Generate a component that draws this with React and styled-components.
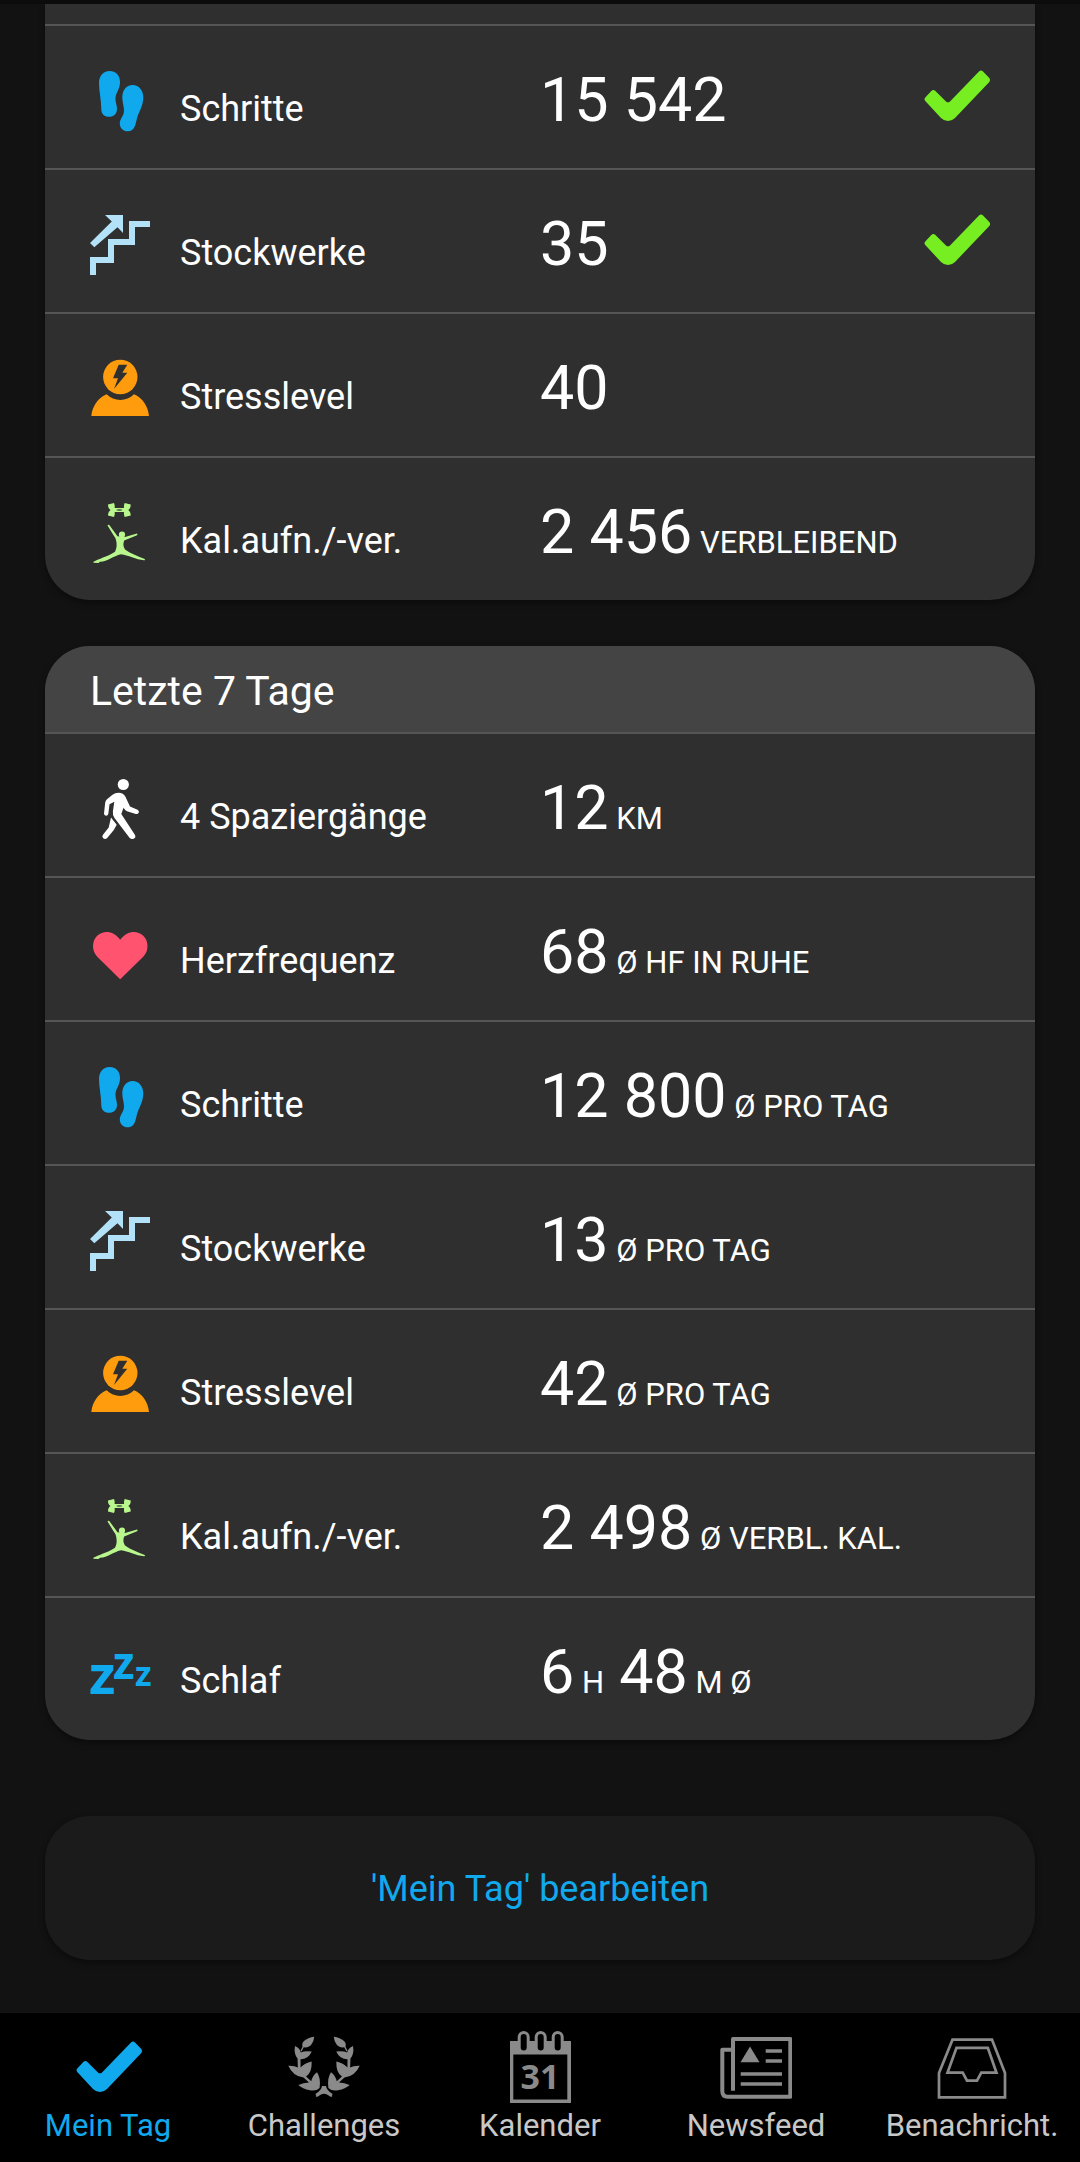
import React, { useState } from "react";
import styled, { createGlobalStyle } from "styled-components";

const GlobalStyle = createGlobalStyle`
  * {
    box-sizing: border-box;
  }
  body {
    margin: 0;
    background-color: #121212;
    color: #ffffff;
    font-family: Roboto, "Liberation Sans", sans-serif;
  }
`;

// Icons
function StepsIcon() {
  return (
    <RowIcon viewBox="0 0 60 60" fill="#11a9ed" aria-hidden="true">
      <path d="M19.5 0C26 0 30 4.500 30 11C30 19 25.500 21 25.500 28C25.500 32 27 34 27 38C27 43 23.500 45.800 19 45.800C14.500 45.800 11.300 43 11.300 38.500C11.300 29 9 20 9 12C9 5 13 0 19.500 0Z" />
      <path d="M42.500 14C49 14 53.300 19.500 53.300 26.500C53.300 35 48.500 41 46.700 48.500C45.200 55 44 60.300 38 60.300C33 60.300 29.800 57 29.800 52.500C29.800 47.500 34 45 34 39.500C34 35 32.300 31.500 32.300 26.500C32.300 19 36.500 14 42.500 14Z" />
    </RowIcon>
  );
}

function StairsIcon() {
  return (
    <RowIcon viewBox="0 0 60 60" fill="#b3e1f8" aria-hidden="true">
      <path d="M0 60V42H18V24H39V6H60V12H45V30H24V48H6V60Z" />
      <path d="M15 0H33V18L27.500 12.200L4.300 32.300L0 28L21.800 6.500Z" />
    </RowIcon>
  );
}

function StressIcon() {
  return (
    <RowIcon viewBox="0 0 60 60" fill="#ff9c0e" aria-hidden="true">
      <circle cx="30.300" cy="18" r="17.200" />
      <path d="M1.300 57C2.500 47 8 39 16.700 35.300C24 42.800 36.600 42.800 44 35.300C52.500 39 58 47 59 57Z" />
      <path
        fill="#2f2f2f"
        d="M28.700 5.700H37.300L32.300 13.700H37.300L24 30L28 19.300H23Z"
      />
    </RowIcon>
  );
}

function CaloriesIcon() {
  return (
    <RowIcon viewBox="0 0 60 60" fill="#b9f68d" aria-hidden="true">
      <path d="M18 1.500L24 0Q25 2 24.700 5H34Q33.700 2 34.700 0L40.700 1.500Q41 5 38.300 7Q41 9 40.700 12.500L34.700 14Q33.700 12 34 9H24.700Q25 12 24 14L18 12.500Q17.700 9 20.500 7Q17.700 5 18 1.500Z" />
      <ellipse cx="29.400" cy="7" rx="3" ry="1" fill="#5d7650" />
      <circle cx="32" cy="31.700" r="3.100" />
      <path d="M17.500 22.500Q18 21.300 19.300 22L27.500 33.200L35 34L47 30.500Q48 31.500 47 32.300L34.200 37.500C33.200 40 32.800 43 35 46.500C41 51 48 53 54.700 56Q55.500 57.500 54 57.200C46 56.500 38 52 31 51.200C23 53 18 58.500 10 58.800L8.500 60L3.300 59.700Q3 58.600 5 58C12 54.500 20 52.500 25 48.700C27 45 27 41 26 37Q25.500 34.500 24 33Z" />
    </RowIcon>
  );
}

function WalkIcon() {
  return (
    <RowIcon viewBox="0 0 60 60" fill="#ffffff" aria-hidden="true">
      <circle cx="33.300" cy="5.500" r="5.600" />
      <path d="M28.500 13.700C32 13.700 34 15 35.300 17.500L40 27.500L47.500 30.700Q49.500 31.800 48.800 33.500Q48 35.500 45.800 35L37 32.300Q35 31.500 33.500 28.800L31.300 35L45 56Q46.200 58.600 43.700 59.800Q41.300 60.700 39.500 58.800L24.500 39Q22.400 36 22.900 32.500L24.300 22.700L19.500 25.300L18.300 35Q17.800 36.800 16 36.700Q14 36.500 14 34.500L15.200 23.500Q15.500 21.600 17 20.300L22.500 15.700Q25 13.700 28.500 13.700Z" />
      <path d="M21 38.500L26.700 45.800L23.800 51L17 59.200Q15 60.700 13.200 59.300Q11.500 57.600 13 55.800L18.700 48.500Z" />
    </RowIcon>
  );
}

function HeartIcon() {
  return (
    <RowIcon viewBox="0 0 60 60" fill="#ff5370" aria-hidden="true">
      <path d="M30.200 56.300L7.500 34C1.500 28 1.500 18 7.500 12.500C14 6.700 24 8 30.200 16.800C36.500 8 46.500 6.700 53 12.500C59 18 59 28 53 34Z" />
    </RowIcon>
  );
}

function SleepIcon() {
  return (
    <RowIcon
      viewBox="0 0 60 60"
      fill="#11a9ed"
      fontFamily="'Open Sans', 'Noto Sans', sans-serif"
      fontWeight="700"
      aria-hidden="true"
    >
      <text x="-1" y="51" fontSize="54">
        z
      </text>
      <text x="23" y="36" fontSize="44">
        z
      </text>
      <text x="45" y="43" fontSize="34">
        z
      </text>
    </RowIcon>
  );
}

const checkPath =
  "M1.500 27.300L7.300 21Q9.300 18.800 11.400 21L22 31.500Q24 33.200 26 31.500L55 1.500Q57 -.500 59 1.500L65.300 8Q67 10 65.300 12L31 48Q28 51 24 51Q20 51 17 48L1.500 31.300Q-.500 29.300 1.500 27.300Z";

function MyDayIcon() {
  return (
    <TabIcon viewBox="0 0 72 72" fill="#11a9ed" aria-hidden="true">
      <path transform="translate(4 10)" d={checkPath} />
    </TabIcon>
  );
}

function Branch() {
  return (
    <>
      <path d="M26.200 5.800Q25.500 12.500 21.500 15.200Q18.500 16.800 15.800 16.300L13.500 20.500L12.500 20L14.500 15.500Q13.500 12.500 16 10Q20 6.500 26.200 5.800Z" />
      <path d="M7 15Q12 17 12.800 21.500Q17 19.500 23.800 20.500Q20 28.500 12.500 28.300L12.600 36.500Q16.500 32 23.700 30.500Q24 42 18 45.500L23.300 50.300Q24.500 44.500 29 41.300Q33 47 31.600 57Q28 60.500 22 59.300Q14.500 58 10.300 54Q15.500 51.800 21 51.500L15.500 46.500Q5 45.500 .300 34.800Q6.500 34.500 9.800 36.600L9.600 27.800Q5.500 22.500 7 15Z" />
    </>
  );
}

function LaurelIcon() {
  return (
    <TabIcon viewBox="0 0 72 72" fill="#8a8a8a" aria-hidden="true">
      <Branch />
      <g transform="translate(72 0) scale(-1 1)">
        <Branch />
      </g>
      <path d="M34 55H38Q38.300 58.800 44.500 63L43.500 66.300Q39 63 36 62.700Q33 63 28.500 66.300L27.500 63Q33.700 58.800 34 55Z" />
    </TabIcon>
  );
}

function CalendarIcon() {
  return (
    <TabIcon viewBox="0 0 72 72" fill="#8a8a8a" aria-hidden="true">
      <rect x="6" y="10" width="61" height="62" />
      <rect x="9.300" y="23.500" width="54" height="45" fill="#000000" />
      {[19.7, 36.7, 53.7].map((x) => (
        <rect
          key={x}
          x={x - 4.5}
          y="1.500"
          width="9"
          height="19.500"
          rx="4.500"
          fill="#000000"
          stroke="#8a8a8a"
          strokeWidth="3"
        />
      ))}
      <text
        x="36"
        y="58"
        fontSize="34"
        fontWeight="700"
        fontFamily="'Open Sans', 'Noto Sans', sans-serif"
        textAnchor="middle"
      >
        31
      </text>
    </TabIcon>
  );
}

function NewsIcon() {
  return (
    <TabIcon
      viewBox="0 0 72 72"
      fill="none"
      stroke="#8a8a8a"
      strokeWidth="4"
      aria-hidden="true"
    >
      <path
        strokeLinejoin="round"
        d="M13 59.700V8H70.300V65.800H7.500Q2.300 65.800 2.300 60V18.800H12"
      />
      <path
        strokeWidth="3.300"
        d="M45.700 20H62M45.700 30H62M20.700 43H62M20.700 53H62"
      />
      <path fill="#8a8a8a" stroke="none" d="M30 15.500L39.500 31.200H20.500Z" />
    </TabIcon>
  );
}

function InboxIcon() {
  return (
    <TabIcon
      viewBox="0 0 72 72"
      fill="none"
      stroke="#8a8a8a"
      strokeWidth="2.700"
      aria-hidden="true"
    >
      <path d="M16.500 8.700H56L69 42V66.300H3V42Z" />
      <path d="M20.500 16.800H51.800L60.500 41.700H45.300L41 49.700H31L26.700 41.700H11.500Z" />
    </TabIcon>
  );
}

// Data
const today = [
  { icon: StepsIcon, label: "Schritte", values: [["15 542"]], done: true },
  { icon: StairsIcon, label: "Stockwerke", values: [["35"]], done: true },
  { icon: StressIcon, label: "Stresslevel", values: [["40"]] },
  {
    icon: CaloriesIcon,
    label: "Kal.aufn./-ver.",
    values: [["2 456", "VERBLEIBEND"]],
  },
];

const lastWeek = [
  { icon: WalkIcon, label: "4 Spaziergänge", values: [["12", "KM"]] },
  { icon: HeartIcon, label: "Herzfrequenz", values: [["68", "Ø HF IN RUHE"]] },
  { icon: StepsIcon, label: "Schritte", values: [["12 800", "Ø PRO TAG"]] },
  { icon: StairsIcon, label: "Stockwerke", values: [["13", "Ø PRO TAG"]] },
  { icon: StressIcon, label: "Stresslevel", values: [["42", "Ø PRO TAG"]] },
  {
    icon: CaloriesIcon,
    label: "Kal.aufn./-ver.",
    values: [["2 498", "Ø VERBL. KAL."]],
  },
  {
    icon: SleepIcon,
    label: "Schlaf",
    values: [
      ["6", "H"],
      ["48", "M Ø"],
    ],
  },
];

const tabs = [
  { icon: MyDayIcon, label: "Mein Tag" },
  { icon: LaurelIcon, label: "Challenges" },
  { icon: CalendarIcon, label: "Kalender" },
  { icon: NewsIcon, label: "Newsfeed" },
  { icon: InboxIcon, label: "Benachricht." },
];

function StatRow({ item }) {
  const Icon = item.icon;
  return (
    <Row>
      <Icon />
      <Label>{item.label}</Label>
      <Value>
        {item.values.map(([number, unit], index) => (
          <React.Fragment key={number}>
            {index > 0 && " "}
            {number}
            {unit && <Unit> {unit}</Unit>}
          </React.Fragment>
        ))}
      </Value>
      {item.done && (
        <DoneIcon viewBox="0 0 66 51" role="img" aria-label="Ziel erreicht">
          <path d={checkPath} />
        </DoneIcon>
      )}
    </Row>
  );
}

function App() {
  const [active, setActive] = useState("Mein Tag");

  return (
    <Page>
      <GlobalStyle />
      <Main>
        <Card $continued>
          <Rows>
            <RowEnd aria-hidden="true" />
            {today.map((item) => (
              <StatRow key={item.label} item={item} />
            ))}
          </Rows>
        </Card>
        <Card>
          <CardTitle>Letzte 7 Tage</CardTitle>
          <Rows>
            {lastWeek.map((item) => (
              <StatRow key={item.label} item={item} />
            ))}
          </Rows>
        </Card>
        <EditButton type="button">'Mein Tag' bearbeiten</EditButton>
      </Main>
      <TabBar>
        {tabs.map(({ icon: Icon, label }) => (
          <Tab
            key={label}
            href="#"
            $active={label === active}
            onClick={() => setActive(label)}
          >
            <Icon />
            {label}
          </Tab>
        ))}
      </TabBar>
    </Page>
  );
}

export default App;

const Page = styled.div`
  display: flex;
  flex-direction: column;
  min-height: 100vh;
  border-top: 4px solid #0c0c0c;
`;

const Main = styled.main`
  display: flex;
  flex-direction: column;
  gap: 46px;
  padding: 0 45px 53px;
`;

const Card = styled.section`
  overflow: hidden;
  background-color: #2f2f2f;
  border-radius: ${(props) => (props.$continued ? "0 0 45px 45px" : "45px")};
  box-shadow: 0 3px 6px rgba(0, 0, 0, 0.4);
`;

const CardTitle = styled.h2`
  margin: 0;
  padding: 21px 45px 17px;
  background-color: #444444;
  font-size: 41px;
  font-weight: 400;
  line-height: 48px;
`;

const Rows = styled.ul`
  margin: 0;
  padding: 0;
  list-style: none;
`;

// lower edge of the row that is scrolled out of view
const RowEnd = styled.li`
  height: 20px;
`;

const Row = styled.li`
  display: grid;
  grid-template-columns: 60px calc(50% - 90px) 1fr auto;
  align-items: baseline;
  padding: 39px 45px 33px;
  border-top: 2px solid #555555;
`;

const RowIcon = styled.svg`
  width: 60px;
  height: 60px;
  margin-top: 6px;
  align-self: start;
  overflow: visible;
`;

const Label = styled.span`
  padding-left: 30px;
  font-size: 36px;
  line-height: 42px;
  white-space: nowrap;
`;

const Value = styled.span`
  padding-left: 30px;
  font-size: 61px;
  line-height: 70px;
  white-space: nowrap;
`;

const Unit = styled.span`
  font-size: 31px;
  line-height: 36px;
`;

const DoneIcon = styled.svg`
  width: 66px;
  height: 51px;
  margin-top: 5px;
  align-self: start;
  fill: #76ee22;
  overflow: visible;
`;

const EditButton = styled.button`
  margin-top: 30px;
  padding: 52px 45px 50px;
  border: none;
  border-radius: 45px;
  background-color: #1b1b1b;
  box-shadow: 0 3px 6px rgba(0, 0, 0, 0.4);
  color: #11a9ed;
  font-family: inherit;
  font-size: 36px;
  line-height: 42px;
  cursor: pointer;
`;

const TabBar = styled.nav`
  display: grid;
  grid-template-columns: repeat(5, 1fr);
  margin-top: auto;
  padding: 18px 0;
  background-color: #000000;
`;

const Tab = styled.a`
  display: flex;
  flex-direction: column;
  align-items: center;
  gap: 5px;
  color: ${(props) => (props.$active ? "#11a9ed" : "#c8c8c8")};
  font-size: 31px;
  line-height: 36px;
  text-decoration: none;
`;

const TabIcon = styled.svg`
  width: 72px;
  height: 72px;
`;
